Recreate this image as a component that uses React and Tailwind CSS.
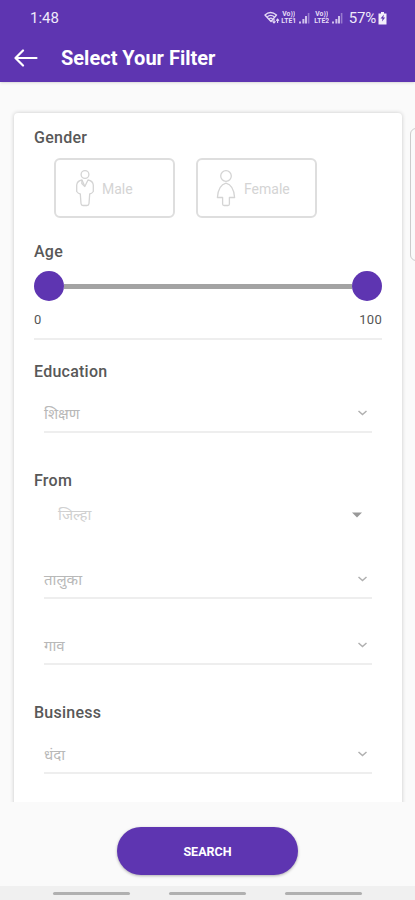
import React, { useState } from 'react';

const StatusIcons = () => (
  <div className="flex items-center">
    <svg width="16" height="14" viewBox="0 0 16 14" fill="none" stroke="#e4daf5" strokeWidth="1.4">
      <path d="M1 4C4.3 .9 8.7 .9 12.5 4L7 10.5Z" strokeLinejoin="round" />
      <path d="M3.3 5.8c2-1.7 4.8-1.7 7 0M5.2 7.8c1-.8 2.4-.8 3.4 0" />
      <path d="M10 8v4M8.5 10.3 10 12l1.5-1.7M13.6 12V8M12.2 9.6l1.4-1.5L15 9.6" strokeWidth="1.1" />
    </svg>
    <Sim label="LTE1" />
    <Sim label="LTE2" />
  </div>
);

const Sim = ({ label }) => (
  <div className="ml-px flex items-center w-[32px]">
    <div className="w-4 flex flex-col items-center text-[6.8px] leading-[7px] font-bold text-[#e6ddf6]">
      <span className="h-[7px] overflow-hidden">Vo))</span>
      <span className="h-[7px] overflow-hidden">{label}</span>
    </div>
    <svg className="ml-[2px]" width="12" height="12" viewBox="0 0 12 12" fill="#cfc0eb">
      <rect x="0" y="9.5" width="2" height="2" />
      <rect x="3.4" y="7" width="2" height="4.5" />
      <rect x="6" y="4" width="2" height="7.5" />
      <rect x="8.8" y="1" width="1.6" height="10.5" opacity=".5" />
    </svg>
  </div>
);

const MaleIcon = () => (
  <svg width="20" height="38" viewBox="0 0 20 38" fill="none" stroke="#d4d4d4" strokeWidth="1.3" strokeLinejoin="round">
    <circle cx="10" cy="5.5" r="3.9" />
    <path d="M7 11C4 11.5 2 13.5 1.7 16V22.5Q3 24.5 5.3 25L6 34.5Q6.2 36.5 8 36.5H12Q13.8 36.5 14 34.5L14.7 25Q17 24.5 18.3 22.5V16C18 13.5 16 11.5 13 11L9.8 17.5Z" />
    <path d="M7 11 6.8 14.5 9.8 17.5" />
  </svg>
);

const FemaleIcon = () => (
  <svg width="20" height="38" viewBox="0 0 20 38" fill="none" stroke="#d4d4d4" strokeWidth="1.3" strokeLinejoin="round">
    <circle cx="10" cy="7" r="5.3" />
    <path d="M10 14.2C4.8 15.5 2 20.5 1.4 28.5H6.6V35Q6.6 36.5 8 36.5H12Q13.4 36.5 13.4 35V28.5H18.6C18 20.5 15.2 15.5 10 14.2Z" />
  </svg>
);

const Title = ({ children, className }) => (
  <h2 className={`h-6 leading-[26px] text-base font-medium tracking-[0.25px] text-[#585858] ${className}`}>{children}</h2>
);

const Field = ({ label, className }) => (
  <div className={`mx-2.5 h-8 flex justify-between border-b-2 border-[#eee] ${className}`}>
    <span className="text-[15px] leading-[26px] text-[#b8b8b8]">{label}</span>
    <svg className="mt-2 mr-1" width="11" height="8" viewBox="0 0 11 8" fill="none" stroke="#b0b0b0" strokeWidth="1.5">
      <path d="m1.5 2 4 3.5 4-3.5" />
    </svg>
  </div>
);

const App = () => {
  const [gender, setGender] = useState(null);

  return (
    <div className="relative w-[415px] h-[900px] overflow-hidden flex flex-col bg-[#fafafa] font-[Roboto,'Noto_Sans',sans-serif]">
      <header className="h-[82px] shrink-0 bg-[#5e35b1] text-white shadow-sm">
        <div className="h-[35px] pt-px pl-[30px] pr-[28px] flex items-center justify-between">
          <span className="text-[15px] text-[#efe9fa]">1:48</span>
          <div className="flex items-center">
            <StatusIcons />
            <span className="ml-[3px] text-[15px] tracking-[-0.2px] text-[#efe9fa]">57%</span>
            <svg className="ml-[2px]" width="9" height="13" viewBox="0 0 9 13">
              <path d="M3 0h3v1.5h2.5v11h-8v-11H3Z" fill="#f3effb" />
              <path d="M6 2.5 2.5 6.5h2l-.5 3L7.2 5.5h-2Z" fill="#5e35b1" />
            </svg>
          </div>
        </div>
        <div className="h-[47px] pl-[14px] flex items-center">
          <svg className="-mt-px" width="24" height="18" viewBox="0 0 24 18" fill="none" stroke="#fff" strokeWidth="2.2" strokeLinecap="round" strokeLinejoin="round">
            <path d="M9 1.5 1.5 9 9 16.5M2 9h20.5" />
          </svg>
          <h1 className="-mt-px ml-[23px] text-xl font-bold">Select Your Filter</h1>
        </div>
      </header>

      <main className="h-[720px] shrink-0 pt-[31px] px-[14px] overflow-hidden">
        <div className="w-[388px] h-[720px] rounded bg-white px-5 pt-3 shadow-[0_0_4px_rgba(0,0,0,0.2)]">
          <Title>Gender</Title>
          <div className="mt-[9px] ml-[20px] flex gap-[21px]">
            <button
              className="w-[121px] h-[60px] pl-[19px] flex items-center border-2 border-[#dedede] rounded-md text-sm text-[#d4d4d4]"
              onClick={() => setGender('male')}
              aria-pressed={gender === 'male'}
            >
              <MaleIcon />
              <span className="ml-[7px] mt-px">Male</span>
            </button>
            <button
              className="w-[121px] h-[60px] pl-[18px] flex items-center border-2 border-[#dedede] rounded-md text-sm text-[#d4d4d4]"
              onClick={() => setGender('female')}
              aria-pressed={gender === 'female'}
            >
              <FemaleIcon />
              <span className="ml-[8px] mt-px">Female</span>
            </button>
          </div>

          <Title className="mt-[21px]">Age</Title>
          <div className="mt-2 flex items-center">
            <span className="size-[30px] rounded-full bg-[#5e35b1]" />
            <span className="flex-1 h-[5px] bg-[#a3a3a3]" />
            <span className="size-[30px] rounded-full bg-[#5e35b1]" />
          </div>
          <div className="mt-[10px] h-4 flex justify-between text-[13px] leading-[18px] tracking-[0.3px] text-[#555]">
            <span>0</span>
            <span>100</span>
          </div>
          <div className="mt-[11px] h-0.5 bg-[#eee]" />

          <Title className="mt-[19px]">Education</Title>
          <Field label="शिक्षण" className="mt-[18px]" />

          <Title className="mt-[35px]">From</Title>
          <div className="mt-[11px] h-6 pl-6 pr-5 flex items-center justify-between">
            <span className="text-[15px] leading-6 text-[#d0d0d0]">जिल्हा</span>
            <svg width="10" height="6" viewBox="0 0 10 6" fill="#999">
              <path d="M0 .5h10L5 5.5Z" />
            </svg>
          </div>
          <Field label="तालुका" className="mt-10" />
          <Field label="गाव" className="mt-[34px]" />

          <Title className="mt-[35px]">Business</Title>
          <Field label="धंदा" className="mt-[18px]" />
        </div>
      </main>

      <footer className="flex-1 flex flex-col items-center justify-between">
        <button className="mt-[25px] pt-0.5 w-[181px] h-12 rounded-full bg-[#5e35b1] text-[12.5px] font-bold text-white shadow-[0_1px_3px_rgba(0,0,0,0.3)]">
          SEARCH
        </button>
        <div className="w-full h-[14px] pl-[53px] pr-[53px] flex items-center justify-between bg-[#f0f0f0]">
          <span className="w-[77px] h-[3px] rounded-full bg-[#b0b0b0]" />
          <span className="w-[77px] h-[3px] rounded-full bg-[#b0b0b0]" />
          <span className="w-[77px] h-[3px] rounded-full bg-[#b0b0b0]" />
        </div>
      </footer>

      {/* edge of the next panel */}
      <div className="absolute left-[410px] top-[128px] w-10 h-[133px] rounded-md border border-[#ccc]" />
    </div>
  );
};

export default App;
